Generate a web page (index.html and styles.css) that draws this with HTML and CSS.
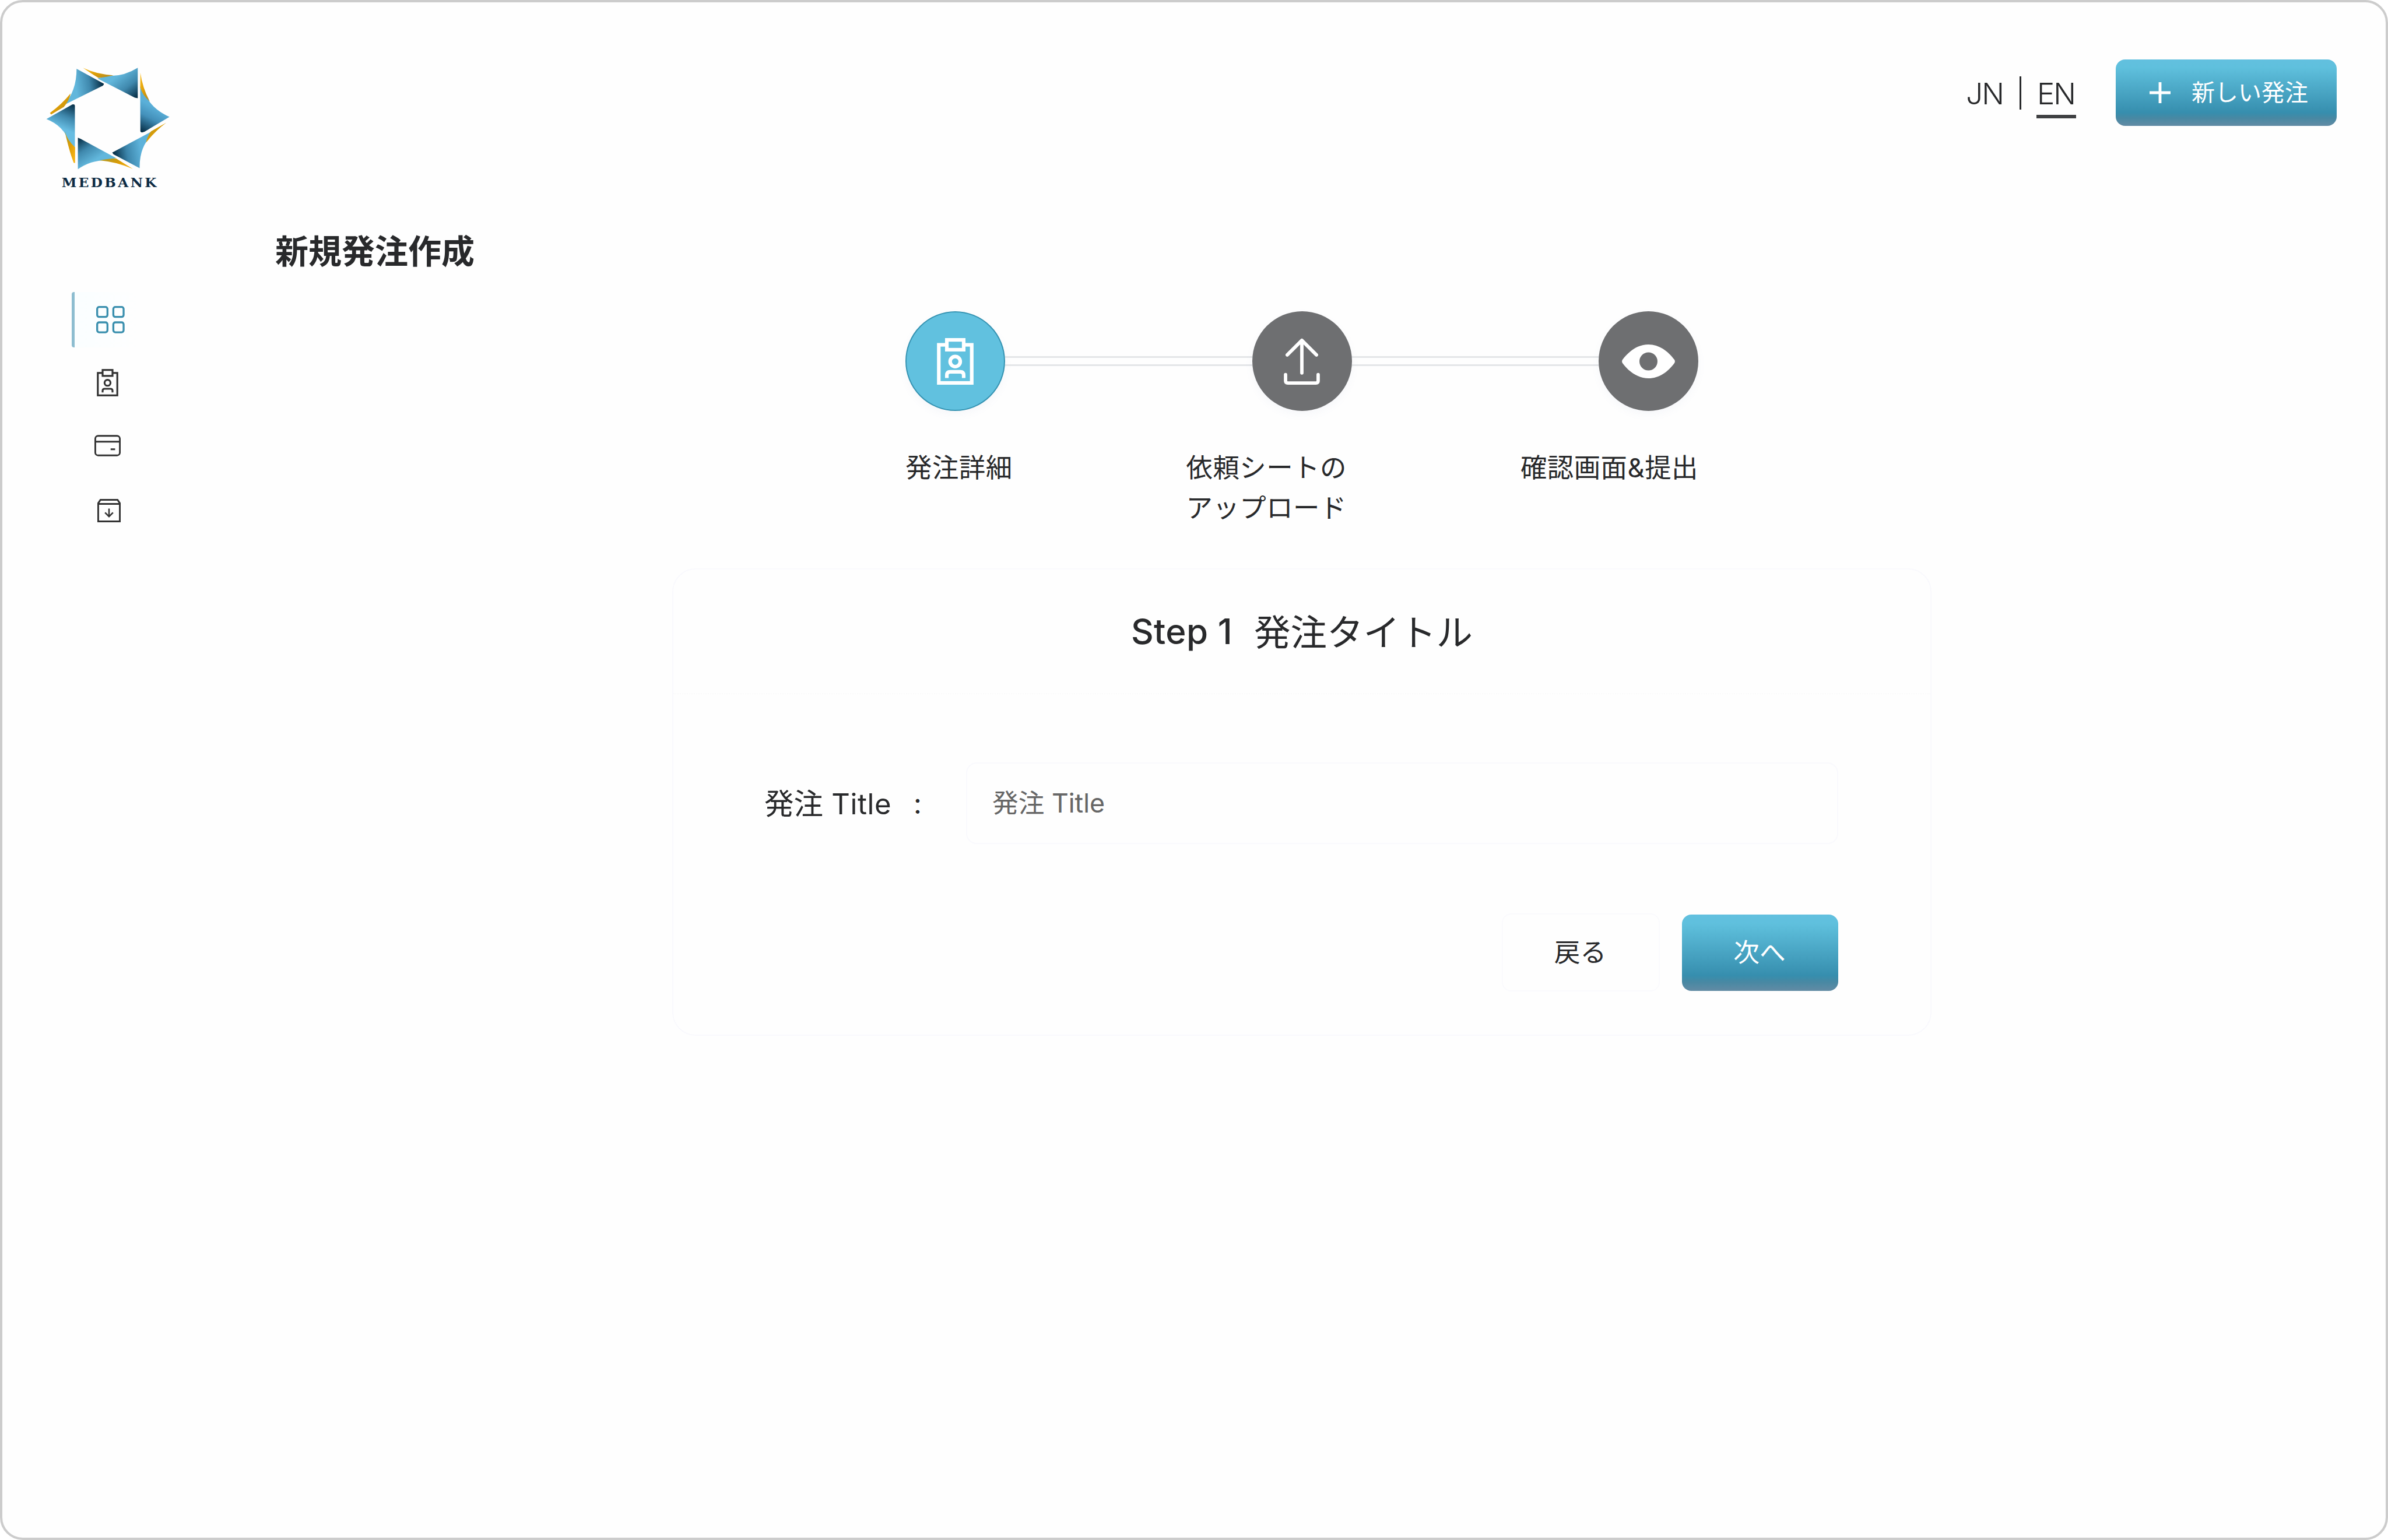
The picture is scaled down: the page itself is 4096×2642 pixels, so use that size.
FILE: index.html
```html
<!DOCTYPE html>
<html lang="ja">
<head>
<meta charset="utf-8">
<title>MEDBANK</title>
<link rel="stylesheet" href="styles.css">
</head>
<body>
<div class="app">
  <aside class="sidebar">
    <svg class="logo" viewBox="0 0 780 780">
      <defs>
        <linearGradient id="ga" gradientUnits="userSpaceOnUse" x1="225" y1="200" x2="372" y2="178"><stop offset="0" stop-color="#62b7dc"/><stop offset=".5" stop-color="#3f88ad"/><stop offset="1" stop-color="#02283f"/></linearGradient>
        <linearGradient id="gb" gradientUnits="userSpaceOnUse" x1="450" y1="130" x2="550" y2="255"><stop offset="0" stop-color="#62b7dc"/><stop offset=".5" stop-color="#3f88ad"/><stop offset="1" stop-color="#02283f"/></linearGradient>
        <linearGradient id="gc" gradientUnits="userSpaceOnUse" x1="640" y1="300" x2="570" y2="435"><stop offset="0" stop-color="#5aafd8"/><stop offset=".4" stop-color="#4390ba"/><stop offset="1" stop-color="#02283f"/></linearGradient>
        <linearGradient id="gd" gradientUnits="userSpaceOnUse" x1="570" y1="520" x2="420" y2="545"><stop offset="0" stop-color="#5db2da"/><stop offset=".5" stop-color="#3c85ab"/><stop offset="1" stop-color="#02283f"/></linearGradient>
        <linearGradient id="ge" gradientUnits="userSpaceOnUse" x1="315" y1="590" x2="235" y2="465"><stop offset="0" stop-color="#62b7dc"/><stop offset=".5" stop-color="#3f88ad"/><stop offset="1" stop-color="#02283f"/></linearGradient>
        <linearGradient id="gf" gradientUnits="userSpaceOnUse" x1="165" y1="420" x2="222" y2="285"><stop offset="0" stop-color="#68bde2"/><stop offset=".45" stop-color="#3f88ad"/><stop offset="1" stop-color="#02283f"/></linearGradient>
        <linearGradient id="gold" x1="0" y1="0" x2="1" y2="1"><stop offset="0" stop-color="#fbc22c"/><stop offset=".5" stop-color="#dd9d05"/><stop offset="1" stop-color="#a9882a"/></linearGradient>
        <linearGradient id="goldr" x1="1" y1="1" x2="0" y2="0"><stop offset="0" stop-color="#fbb91c"/><stop offset=".5" stop-color="#dd9d05"/><stop offset="1" stop-color="#a9982a"/></linearGradient>
      </defs>
      <path fill="url(#ga)" d="M228 96 L374 176 Q372 186 360 190 L160 290 Q228 215 228 96Z"/>
      <path fill="url(#gold)" d="M196 228 Q150 285 86 332 L92 340 L160 300 Q190 265 196 228Z"/>
      <path fill="url(#gb)" d="M554 91 V253 L538 250 L340 148 L390 134 Q475 140 554 91Z"/>
      <path fill="url(#gold)" d="M262 91 Q330 125 425 131 Q390 140 345 145 Q310 125 262 91Z"/>
      <path fill="url(#gc)" d="M567 190 L606 255 Q640 315 723 353 L590 432 Q570 440 568 430Z"/>
      <path fill="url(#gold)" d="M568 117 Q580 200 618 270 Q580 240 567 195Z"/>
      <path fill="url(#gd)" d="M418 543 L625 432 L600 485 Q563 540 564 626 L425 552Z"/>
      <path fill="url(#goldr)" d="M706 384 Q650 425 598 490 Q605 455 625 430Z"/>
      <path fill="url(#ge)" d="M235 464 L250 470 L438 572 L400 585 Q310 580 235 632Z"/>
      <path fill="url(#goldr)" d="M528 630 Q440 592 350 584 Q400 575 438 574Z"/>
      <path fill="url(#gf)" d="M67 364 L205 287 Q219 283 219 295 V515 L190 490 Q160 400 67 364Z"/>
      <path fill="url(#goldr)" d="M165 430 Q190 540 213 598 L220 598 V515 Q180 480 165 430Z"/>
      <text class="logo-name" x="148" y="728" textLength="506">MEDBANK</text>
    </svg>
    <nav class="nav">
      <a class="nav-item nav-item-active">
        <svg class="icon-grid" viewBox="0 0 50 48" fill="none" stroke="#3a8fae" stroke-width="3.4"><rect x="1.7" y="1.7" width="18" height="17.4" rx="3.5"/><rect x="30" y="1.7" width="18" height="17.4" rx="3.5"/><rect x="1.7" y="28.6" width="18" height="17.4" rx="3.5"/><rect x="30" y="28.6" width="18" height="17.4" rx="3.5"/></svg>
      </a>
      <a class="nav-item">
        <svg class="icon-clip" viewBox="0 0 65 83" fill="none" stroke="#333" stroke-width="5.6"><rect x="3" y="12" width="59" height="68"/><rect x="17.5" y="3" width="30" height="18" fill="#fefefe"/><circle cx="32.4" cy="41.8" r="9"/><path d="M17.5 71v-5q0-6 6-6h18q6 0 6 6v5"/></svg>
      </a>
      <a class="nav-item">
        <svg class="icon-card" viewBox="0 0 47 38" fill="none" stroke="#333" stroke-width="3"><rect x="1.5" y="1.5" width="44" height="35" rx="5"/><path d="M1.5 12h44M29 25.500h8"/></svg>
      </a>
      <a class="nav-item">
        <svg class="icon-archive" viewBox="0 0 41 41" fill="none" stroke="#333" stroke-width="3"><path d="M1.500 7.500v32h38v-32l-4-6h-30zM1.500 8.800h38"/><path stroke-width="2.600" d="M20.500 17v13M13.500 24l7 7 7-7"/></svg>
      </a>
    </nav>
  </aside>
  <main class="main">
    <header class="topbar">
      <div class="languages">
        <a class="language">JN</a>
        <span class="language-divider"></span>
        <a class="language language-active">EN</a>
      </div>
      <button class="button button-primary button-new">
        <svg class="icon-plus" viewBox="0 0 36 36" stroke="#fff" stroke-width="4.800"><path d="M18 0v36M0 18h36"/></svg>
        <span class="button-text">新しい発注</span>
      </button>
    </header>
    <h1 class="page-title">新規発注作成</h1>
    <section class="content">
      <div class="stepper">
        <div class="steps">
          <div class="step step-active">
            <svg class="step-clip" viewBox="0 0 65 83" fill="none" stroke="#fff" stroke-width="6.400"><rect x="3.200" y="12" width="58.600" height="67.800"/><rect x="17.500" y="3.200" width="30" height="17.500" fill="#61c1df"/><circle cx="32.400" cy="41.800" r="9"/><path d="M17.500 71v-5q0-6 6-6h18q6 0 6 6v5"/></svg>
          </div>
          <div class="connector"></div>
          <div class="step">
            <svg class="step-upload" viewBox="0 0 64 83" fill="none" stroke="#fff" stroke-width="6" stroke-linecap="round" stroke-linejoin="round"><path d="M32 4v58M6 30 32 4l26 26M3 65v11q0 4 4 4h50q4 0 4-4v-11"/></svg>
          </div>
          <div class="connector"></div>
          <div class="step">
            <svg class="step-eye" viewBox="0 0 94 60"><path fill="#fff" fill-rule="evenodd" d="M1 27C12 12 28 0 47 0s35 12 46 27q2 3 0 6C82 48 66 60 47 60S12 48 1 33q-2-3 0-6zM47 14a16 16 0 1 0 0 32a16 16 0 1 0 0-32z"/></svg>
          </div>
        </div>
        <div class="step-labels">
          <span>発注詳細</span>
          <span>依頼シートの<br>アップロード</span>
          <span>確認画面&amp;提出</span>
        </div>
      </div>
      <form class="card">
        <h2 class="card-title"><span class="card-step">Step 1</span><span class="card-name">発注タイトル</span></h2>
        <div class="card-body">
          <div class="field">
            <label class="field-label" for="title">発注 <span class="field-latin">Title</span></label>
            <span class="field-colon">:</span>
            <input class="field-input" id="title" type="text" placeholder="発注 Title">
          </div>
          <div class="actions">
            <button class="button button-back" type="button">戻る</button>
            <button class="button button-primary button-next" type="button">次へ</button>
          </div>
        </div>
      </form>
    </section>
  </main>
</div>
</body>
</html>
```
FILE: styles.css
```css
* {
  box-sizing: border-box;
}

body {
  margin: 0;
  background: #fff;
  color: #28292b;
  font-family: Inter, "Noto Sans CJK JP", sans-serif;
}

svg {
  display: block;
}

.app {
  display: grid;
  grid-template-columns: 468px 3536px;
  width: 4096px;
  height: 2642px;
  border: 4px solid #ccc;
  border-radius: 39px;
  background: #fefefe;
}

/* Sidebar */

.sidebar {
  padding-top: 83px;
}

.logo {
  width: 251px;
  height: 251px;
  margin-left: 54px;
}

.logo-name {
  fill: #0d2b43;
  font: bold 72px "DejaVu Serif", serif;
}

.nav {
  display: flex;
  flex-direction: column;
  margin: 163px 0 0 119px;
}

.nav-item {
  display: flex;
  align-items: center;
  height: 110px;
  padding-left: 43px;
}

.nav-item-active {
  height: 95px;
  width: 117px;
  padding-left: 37px;
  border-left: 5px solid #8dbdd0;
  border-radius: 4px 0 0 4px;
  background: linear-gradient(90deg, #fafeff, #fefefe);
}

.icon-grid {
  width: 49px;
  height: 47px;
}

.icon-clip {
  width: 37px;
  height: 47px;
  margin-top: 11px;
}

.icon-card {
  width: 45px;
  height: 37px;
  margin: 6px 0 0 -4px;
}

.icon-archive {
  width: 40px;
  height: 40px;
  margin: 9px 0 0 1px;
}

/* Top bar */

.topbar {
  display: flex;
  justify-content: flex-end;
  align-items: flex-start;
  padding-top: 98px;
}

.languages {
  display: flex;
  margin: 28px 68px 0 0;
}

.language {
  height: 73px;
  padding: 0 3px;
  font-size: 51px;
  font-weight: 300;
  line-height: 61px;
  letter-spacing: -2px;
}

.language-active {
  width: 68px;
  padding: 0 0 0 1px;
  border-bottom: 6px solid #3f4042;
}

.language-divider {
  width: 3px;
  height: 57px;
  margin: 1px 26px 0 25px;
  background: #28292b;
}

.button {
  border: 0;
  border-radius: 16px;
  color: #28292b;
  font-family: inherit;
  font-size: 44.700px;
  text-align: center;
}

.button-primary {
  background: linear-gradient(#62c0df 0%, #5fc0dd 12%, #368eae 80%, #4788a3 88%, #628ba4 100%);
  color: #fff;
}

.button-new {
  display: flex;
  align-items: center;
  gap: 36px;
  width: 379px;
  height: 114px;
  padding: 0 0 0 58px;
  font-size: 40px;
}

.button-text {
  padding-bottom: 6px;
}

.icon-plus {
  width: 36px;
  height: 36px;
}

.page-title {
  margin: 176px 0 0;
  font-size: 57px;
  font-weight: 700;
  line-height: 80px;
}

/* Stepper */

.content {
  display: flex;
  flex-direction: column;
  align-items: center;
  padding: 62px 14px 0 0;
}

.stepper {
  width: 1360px;
}

.steps {
  display: flex;
  align-items: center;
}

.step {
  display: flex;
  align-items: center;
  justify-content: center;
  width: 171px;
  height: 171px;
  border-radius: 50%;
  background: #6e6f71;
  box-shadow: 0 6px 14px rgba(120, 130, 180, .06);
}

.step-active {
  border: 2px solid #3593b2;
  background: #61c1df;
}

.step-clip {
  width: 63px;
  height: 80px;
}

.step-upload {
  width: 62px;
  height: 80px;
}

.step-eye {
  width: 91px;
  height: 58px;
}

.connector {
  flex: 1;
  height: 17px;
  border: solid #e4e6e8;
  border-width: 3px 0;
}

.step-labels {
  display: flex;
  justify-content: space-between;
  margin-top: 64px;
  font-size: 45.400px;
  line-height: 68.500px;
  letter-spacing: .5px;
}

/* Form card */

.card {
  width: 2160px;
  margin-top: 69px;
  border: 2px solid #f9f9fd;
  border-radius: 40px;
}

.card-title {
  display: flex;
  align-items: center;
  justify-content: center;
  gap: 37px;
  height: 214px;
  margin: 0;
  border-bottom: 2px dotted #fafafa;
  font-size: 62.500px;
  font-weight: 400;
}

.card-step {
  font-size: 60px;
  font-weight: 500;
  letter-spacing: .4px;
}

.card-name {
  padding-bottom: 6px;
}

.card-body {
  padding: 117px 158px 74px 156px;
}

.field {
  display: flex;
  align-items: center;
}

.field-label {
  width: 256px;
  padding-bottom: 6px;
  font-size: 50.500px;
  white-space: nowrap;
}

.field-latin {
  font-size: 49px;
  letter-spacing: .6px;
}

.field-colon {
  width: 90px;
  font-size: 48px;
}

.field-input {
  flex: 1;
  height: 140px;
  padding: 0 43px;
  border: 2px solid #f9f9fd;
  border-radius: 18px;
  outline: 0;
  background: transparent;
  font-family: inherit;
  font-size: 44.700px;
}

.field-input::placeholder {
  color: #666;
}

.actions {
  display: flex;
  align-items: center;
  justify-content: flex-end;
  gap: 38px;
  margin-top: 119px;
}

.button-back {
  width: 271px;
  height: 134px;
  padding: 0 2px 8px 0;
  border: 2px solid #fafafd;
  background: transparent;
}

.button-next {
  width: 268px;
  height: 131px;
  padding: 0 2px 8px 0;
}
```
